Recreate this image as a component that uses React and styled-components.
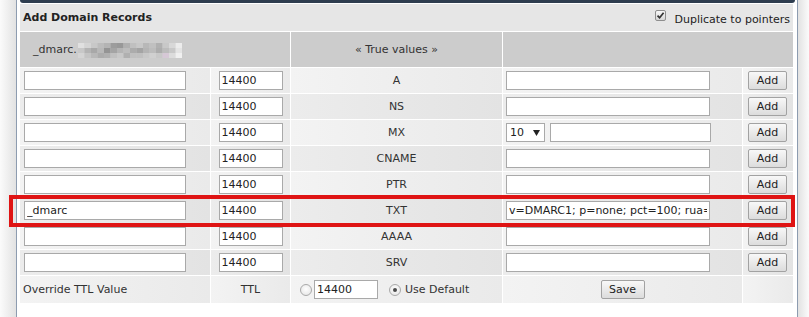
import React from "react";
import styled, { createGlobalStyle, css } from "styled-components";

const Global = createGlobalStyle`
  html, body { margin: 0; padding: 0; background: #fff; }
  body {
    font-family: "DejaVu Sans", Verdana, sans-serif;
    font-size: 11px;
    color: #2b2b2b;
  }
`;

const FONT = `"DejaVu Sans", Verdana, sans-serif`;

const Page = styled.div`
  position: relative;
  display: flex;
  width: 809px;
  height: 317px;
  overflow: hidden;
`;

const Shadow = styled.div`
  flex: none;
  width: ${(p) => p.$w}px;
  background: linear-gradient(
    ${(p) => (p.$side === "left" ? "to right" : "to left")},
    #fbfbfb,
    #e2e2e2
  );
`;

const Panel = styled.div`
  flex: none;
  width: 773px;
  padding: 0 4px 0 3px;
  border-left: 1px solid #8d9cb0;
  border-right: 1px solid #8d9cb0;
  background: #fff;
`;

const TopBar = styled.div`
  height: 3px;
  margin: 0 -2px 1px 0;
  background: #2e3d4f;
  border-radius: 0 0 3px 3px;
`;

const Grid = styled.div`
  display: grid;
  grid-template-columns: 190px 79px 211px 239px 50px;
  grid-template-rows: 27px 35px repeat(8, 25px) 27px;
  gap: 1px;
  background: #fff;
`;

const TitleRow = styled.div`
  grid-column: 1 / -1;
  display: flex;
  justify-content: space-between;
  align-items: center;
  padding: 0 3px;
  background: #e6e6e6;
`;

const Title = styled.span`
  font-weight: bold;
  color: #222;
  margin-top: -1px;
`;

const CheckLabel = styled.label`
  align-self: flex-start;
  margin-top: 6px;
  display: flex;
  align-items: flex-start;
  gap: 8px;
  color: #222;
`;

const CheckText = styled.span`
  padding-top: 3px;
`;

const CheckBox = styled.span`
  box-sizing: border-box;
  width: 11px;
  height: 11px;
  border: 1px solid #8e8e8e;
  border-radius: 2px;
  background: linear-gradient(#f8f8f8, #d6d6d6);
  display: flex;
  align-items: center;
  justify-content: center;
`;

const HeadCell = styled.div`
  grid-column: span ${(p) => p.$span || 1};
  display: flex;
  align-items: center;
  justify-content: ${(p) => (p.$center ? "center" : "flex-start")};
  padding-left: ${(p) => p.$pad || 0}px;
  background: #cccccc;
  color: #333;
`;

const Cell = styled.div`
  display: flex;
  align-items: center;
  justify-content: ${(p) => p.$justify || "flex-start"};
  padding-left: ${(p) => p.$pad || 0}px;
  gap: ${(p) => p.$gap || 0}px;
  color: #333;
  ${(p) =>
    p.$alt
      ? css`background: linear-gradient(to right, #ececec, #e3e3e3);`
      : css`background: linear-gradient(to right, #f3f3f3, #eaeaea);`}
`;

const TextInput = styled.input`
  box-sizing: border-box;
  width: ${(p) => p.$w}px;
  height: 19px;
  margin: 0;
  padding: 0 2px;
  border: 1px solid #a9a9a9;
  border-radius: 0;
  background: #fff;
  font: 11px ${FONT};
  color: #222;
  outline: none;
`;

const Button = styled.button`
  box-sizing: border-box;
  width: ${(p) => p.$w}px;
  height: 19px;
  margin: 0;
  padding: 0;
  border: 1px solid #a2a2a2;
  border-radius: 2px;
  background: linear-gradient(#f8f8f8, #dcdcdc);
  font: 11px ${FONT};
  color: #222;
`;

const SelectBox = styled.div`
  box-sizing: border-box;
  width: 39px;
  height: 19px;
  border: 1px solid #a9a9a9;
  background: #fff;
  display: flex;
  align-items: center;
  padding-left: 3px;
  gap: 9px;
  color: #222;
`;

const Radio = styled.span`
  position: relative;
  box-sizing: border-box;
  flex: none;
  width: 12px;
  height: 12px;
  border-radius: 50%;
  border: 1px solid #a9a9a9;
  background: radial-gradient(circle at 50% 40%, #fefefe, #e2e2e2);
  ${(p) =>
    p.$checked &&
    css`
      &::after {
        content: "";
        position: absolute;
        left: 3px;
        top: 3px;
        width: 4px;
        height: 4px;
        border-radius: 50%;
        background: #4a4a4a;
      }
    `}
`;

const OverrideCell = styled(Cell)`
  padding-left: 9px;
`;

const Highlight = styled.div`
  position: absolute;
  left: 9px;
  top: 195px;
  width: 786px;
  height: 32px;
  box-sizing: border-box;
  border: 4px solid #df1414;
  pointer-events: none;
`;

const mosaic = [
  ["e0", "d4", "c8", "bc", "b4", "9c", "98", "b0", "c0", "c8", "b8", "c0", "b0", "c8", "d8", "ec"],
  ["c8", "b4", "a8", "b8", "94", "a4", "b4", "bc", "ac", "a4", "b4", "bc", "ac", "bc", "c8", "e4"],
  ["d4", "c4", "b8", "ac", "b0", "c0", "c8", "b0", "c0", "c0", "c8", "d0", "c8", "d0", "dc", "f0"],
];

const Redacted = () => (
  <svg width="104" height="15" viewBox="0 0 104 15" style={{ marginLeft: 1, marginTop: 2 }}>
    {mosaic.map((row, r) =>
      row.map((g, c) => (
        <rect
          key={`${r}-${c}`}
          x={c * 6.5}
          y={r * 5}
          width="6.6"
          height="5.1"
          fill={r === 2 && c === 13 ? "#d6c8d6" : `#${g}${g}${g}`}
        />
      ))
    )}
  </svg>
);

const Check = () => (
  <svg width="9" height="9" viewBox="0 0 9 9">
    <path d="M1.5 4.6 L3.6 6.8 L7.6 1.8" fill="none" stroke="#333" strokeWidth="1.7" />
  </svg>
);

const Arrow = () => (
  <svg width="7" height="6" viewBox="0 0 7 6">
    <path d="M0 0 H7 L3.5 6 Z" fill="#222" />
  </svg>
);

const rows = [
  { type: "A" },
  { type: "NS" },
  { type: "MX", mx: true },
  { type: "CNAME" },
  { type: "PTR" },
  { type: "TXT", name: "_dmarc", value: "v=DMARC1; p=none; pct=100; rua=mailto:" },
  { type: "AAAA" },
  { type: "SRV" },
];

export default function App() {
  return (
    <>
      <Global />
      <Page>
        <Shadow $side="left" $w={16} />
        <Panel>
          <TopBar />
          <Grid>
            <TitleRow>
              <Title>Add Domain Records</Title>
              <CheckLabel>
                <CheckBox>
                  <Check />
                </CheckBox>
                <CheckText>Duplicate to pointers</CheckText>
              </CheckLabel>
            </TitleRow>

            <HeadCell $span={2} $pad={13}>
              _dmarc.
              <Redacted />
            </HeadCell>
            <HeadCell $center>« True values »</HeadCell>
            <HeadCell $span={2} />

            {rows.map((r, i) => {
              const alt = i % 2 === 1;
              return (
                <React.Fragment key={r.type}>
                  <Cell $alt={alt} $pad={4}>
                    <TextInput $w={162} defaultValue={r.name || ""} />
                  </Cell>
                  <Cell $alt={alt} $justify="center">
                    <TextInput $w={64} defaultValue="14400" />
                  </Cell>
                  <Cell $alt={alt} $justify="center">
                    {r.type}
                  </Cell>
                  <Cell $alt={alt} $pad={3} $gap={5}>
                    {r.mx ? (
                      <>
                        <SelectBox>
                          <span>10</span>
                          <Arrow />
                        </SelectBox>
                        <TextInput $w={161} defaultValue="" />
                      </>
                    ) : (
                      <TextInput $w={204} defaultValue={r.value || ""} />
                    )}
                  </Cell>
                  <Cell $alt={alt} $pad={5}>
                    <Button $w={39}>Add</Button>
                  </Cell>
                </React.Fragment>
              );
            })}

            <Cell $pad={3}>Override TTL Value</Cell>
            <Cell $justify="center">TTL</Cell>
            <OverrideCell>
              <Radio />
              <TextInput $w={64} defaultValue="14400" style={{ marginLeft: 2 }} />
              <Radio $checked style={{ marginLeft: 11 }} />
              <span style={{ marginLeft: 4 }}>Use Default</span>
            </OverrideCell>
            <Cell $justify="center">
              <Button $w={44}>Save</Button>
            </Cell>
            <Cell />
          </Grid>
        </Panel>
        <Shadow $side="right" $w={11} />
        <Highlight />
      </Page>
    </>
  );
}
